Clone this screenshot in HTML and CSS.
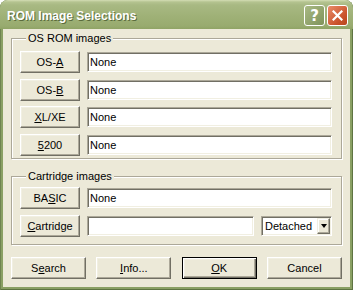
FILE: index.html
```html
<!DOCTYPE html>
<html lang="en">
<head>
    <meta charset="UTF-8">
    <title>ROM Image Selections</title>
    <link rel="stylesheet" href="styles.css">
</head>
<body>
    <main class="window">
        <header class="titlebar">
            <h1 class="title">ROM Image Selections</h1>
            <div class="caption-buttons">
                <span class="cap-btn cap-help">?</span>
                <span class="cap-btn cap-close">
                    <svg width="11" height="11" viewBox="0 0 11 11">
                        <path d="M1.5 1.5 L9.5 9.5 M9.5 1.5 L1.5 9.5" stroke="#fff" stroke-width="2.2" stroke-linecap="square"/>
                    </svg>
                </span>
            </div>
        </header>
        <div class="client">
            <section class="group group-os">
                <div class="group-title">OS ROM images</div>
                <div class="rows">
                    <button class="btn">OS-<u>A</u></button>
                    <div class="field">None</div>
                    <button class="btn">OS-<u>B</u></button>
                    <div class="field">None</div>
                    <button class="btn"><u>X</u>L/XE</button>
                    <div class="field">None</div>
                    <button class="btn"><u>5</u>200</button>
                    <div class="field">None</div>
                </div>
            </section>
            <section class="group group-cart">
                <div class="group-title">Cartridge images</div>
                <div class="rows">
                    <button class="btn">BA<u>S</u>IC</button>
                    <div class="field">None</div>
                    <button class="btn"><u>C</u>artridge</button>
                    <div class="cart-line">
                        <div class="field cart-field"></div>
                        <div class="combo">
                            <span class="combo-text">Detached</span>
                            <span class="combo-arrow"></span>
                        </div>
                    </div>
                </div>
            </section>
            <div class="actions">
                <button class="btn btn-wide">S<u>e</u>arch</button>
                <button class="btn btn-wide"><u>I</u>nfo...</button>
                <button class="btn btn-wide btn-default"><u>O</u>K</button>
                <button class="btn btn-wide">Cancel</button>
            </div>
        </div>
    </main>
</body>
</html>
```

FILE: styles.css
```css
body {
    margin: 0;
    background: #fff;
    font-family: "Liberation Sans", Tahoma, sans-serif;
    font-size: 11px;
    color: #000;
}

.window {
    width: 353px;
    height: 290px;
    box-sizing: border-box;
    background: #8aa064;
    border-radius: 8px 8px 0 0;
    box-shadow: inset 1px 0 #6f8450, inset -1px 0 #5e7442, inset 0 -1px #5e7442;
    display: flex;
    flex-direction: column;
}

/* title bar */
.titlebar {
    height: 29px;
    box-sizing: border-box;
    padding: 5px 5px 0 7px;
    display: flex;
    justify-content: space-between;
    align-items: flex-start;
    border-radius: 8px 8px 0 0;
    background: linear-gradient(#d3ddb4 0, #b4c390 2px, #a8b983 5px, #9fb177 16px, #98ab6f 26px, #8fa365 29px);
}

.title {
    margin: 1px 0 0;
    font-size: 12px;
    font-weight: bold;
    line-height: 21px;
    color: #fff;
    text-shadow: 1px 1px #5a6b3c;
}

.caption-buttons {
    display: flex;
    gap: 2px;
}

.cap-btn {
    width: 21px;
    height: 21px;
    box-sizing: border-box;
    border: 1px solid #fff;
    border-radius: 3px;
    display: flex;
    justify-content: center;
    align-items: center;
}

.cap-help {
    background: linear-gradient(135deg, #a9b984, #7f935a);
    color: #fff;
    font-family: "DejaVu Sans", sans-serif;
    font-size: 15px;
    font-weight: bold;
}

.cap-close {
    background: linear-gradient(135deg, #e98c6a, #c9512a 70%, #b8461f);
}

/* dialog body */
.client {
    height: 258px;
    margin: 0 3px;
    padding: 0 8px;
    background: #ece9d8;
    box-sizing: border-box;
}

.group {
    border: 1px solid #aca899;
    box-shadow: 1px 1px #fff, inset 1px 1px #fff;
    padding: 0 9px 2.5px 8px;
}

.group-os {
    margin-top: 9px;
}

.group-cart {
    margin-top: 17px;
    padding-bottom: 7.5px;
}

.group-title {
    width: max-content;
    margin: -7px 0 0 6px;
    padding: 0 2px;
    line-height: 13px;
    background: #ece9d8;
}

.rows {
    display: grid;
    grid-template-columns: 60px 1fr;
    grid-auto-rows: 22px;
    column-gap: 7px;
    row-gap: 5.5px;
    align-items: center;
    margin-top: 6px;
}

.group-cart .rows {
    margin-top: 4px;
}

.btn {
    height: 22px;
    padding: 0;
    font: inherit;
    color: #000;
    background: #ece9d8;
    border: 1px solid;
    border-color: #fff #716f64 #716f64 #fff;
    box-shadow: inset -1px -1px #aca899, inset 1px 1px #f1efe2;
}

.btn u {
    text-underline-offset: 1px;
}

.field {
    height: 20px;
    box-sizing: border-box;
    padding-left: 2px;
    line-height: 18px;
    background: #fff;
    border: 1px solid;
    border-color: #aca899 #fff #fff #aca899;
    box-shadow: inset 1px 1px #716f64, inset -1px -1px #f1efe2;
}

.cart-line {
    display: flex;
    gap: 7px;
}

.cart-field {
    width: 167px;
}

.combo {
    flex: 1;
    height: 20px;
    box-sizing: border-box;
    display: flex;
    justify-content: space-between;
    align-items: center;
    padding: 1px 1px 1px 3px;
    background: #fff;
    border: 1px solid;
    border-color: #aca899 #fff #fff #aca899;
    box-shadow: inset 1px 1px #716f64, inset -1px -1px #f1efe2;
}

.combo-arrow {
    width: 13px;
    height: 16px;
    box-sizing: border-box;
    display: flex;
    justify-content: center;
    align-items: center;
    background: #ece9d8;
    border: 1px solid;
    border-color: #f1efe2 #716f64 #716f64 #f1efe2;
    box-shadow: inset -1px -1px #aca899, inset 1px 1px #fff;
}

.combo-arrow::after {
    content: "";
    border-left: 3.5px solid transparent;
    border-right: 3.5px solid transparent;
    border-top: 4px solid #000;
    margin-top: 1px;
}

.actions {
    display: flex;
    justify-content: space-between;
    margin-top: 12px;
}

.btn-wide {
    width: 75px;
}

.btn-default {
    border-color: #000;
    box-shadow: inset 1px 1px #fff, inset -1px -1px #716f64, inset -2px -2px #aca899, inset 2px 2px #f1efe2;
}
```
